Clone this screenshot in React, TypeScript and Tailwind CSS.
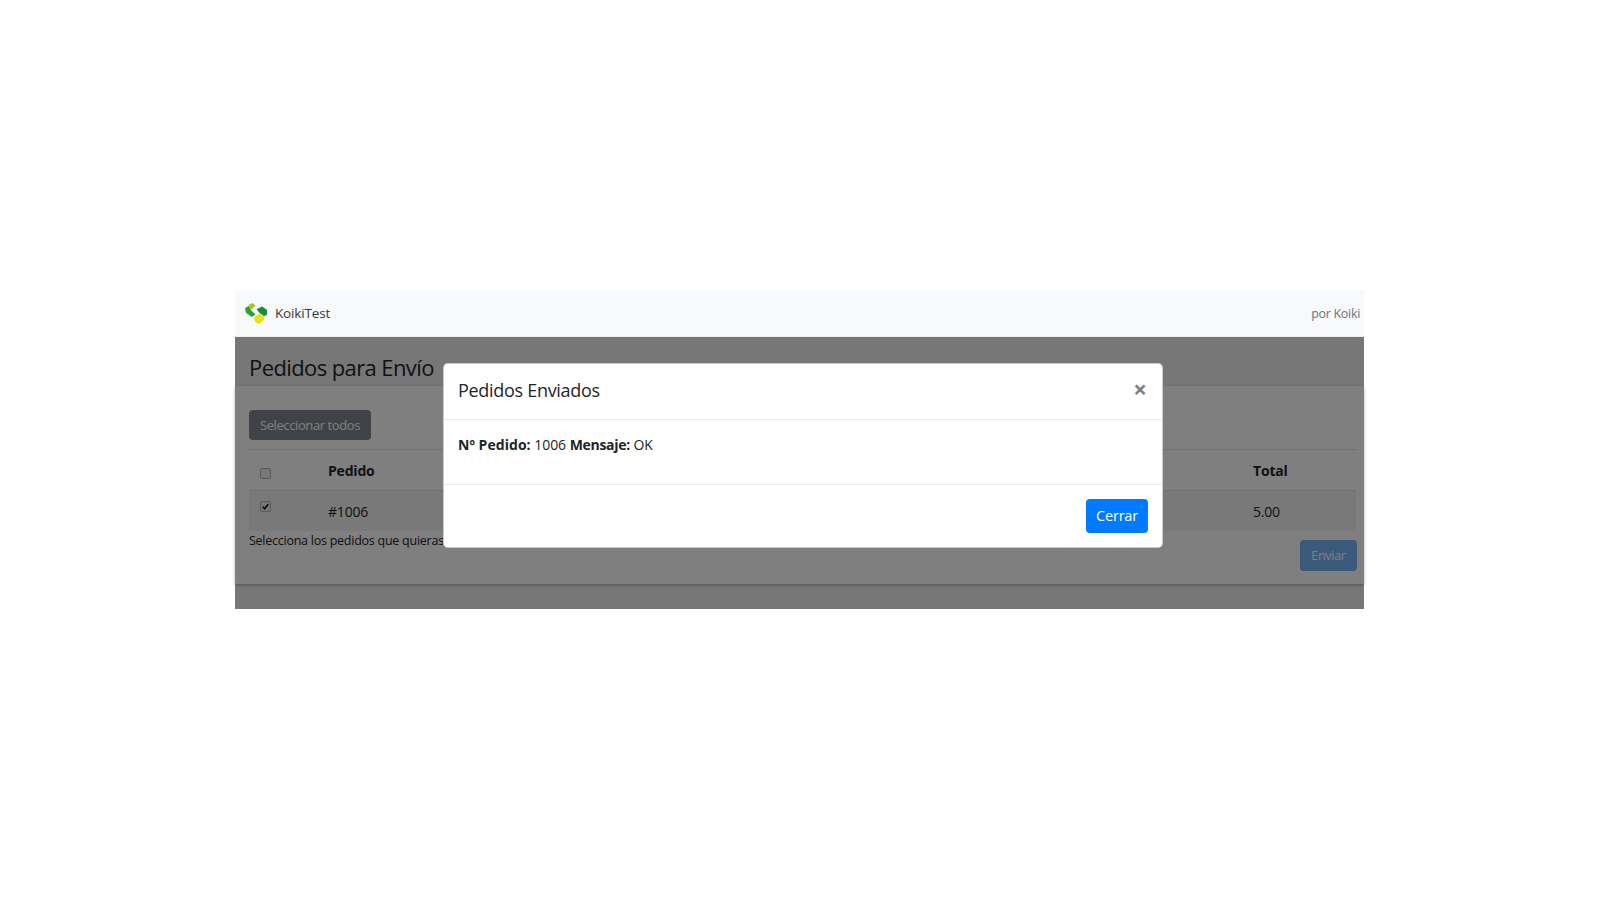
const font = "font-['Open_Sans','Noto_Sans',sans-serif]";

function Logo() {
  return (
    <svg width="23" height="21" viewBox="0 0 24 24" preserveAspectRatio="none" className="shrink-0">
      <polygon points="4,2 8,0 11,3 6,8" fill="#a6c80c" />
      <polygon points="0,6 4,3 6,8 11,13 7,16 1,11" fill="#2f9e37" />
      <polygon points="12,7 18,4 23,8 23,13 20,15 15,11" fill="#1c8a3c" />
      <polygon points="9,17 15,12 20,15 20,19 15,24 11,22" fill="#e9e21a" />
    </svg>
  );
}

function Checkbox({ checked, className }: { checked?: boolean; className: string }) {
  return (
    <span className={`relative block h-[11px] w-[11px] ${className}`}>
      <input
        type="checkbox"
        checked={!!checked}
        readOnly
        className="block h-[11px] w-[11px] appearance-none rounded-[2px] border border-[#b4b4b4] bg-[#f0f0f0]"
      />
      {checked && (
        <svg viewBox="0 0 12 12" className="absolute inset-0 h-[11px] w-[11px]">
          <path d="M3 6.2 5 8.4 9 3.6" fill="none" stroke="#111" strokeWidth="1.8" />
        </svg>
      )}
    </span>
  );
}

export default function App() {
  return (
    <div className={`min-h-[900px] bg-white pt-[290px] pl-[235px] text-[#212529] ${font}`}>
      <div className="relative w-[1129px]">
        <nav className="flex h-[47px] items-center justify-between border-b border-[#eceef0] bg-[#f8f9fa] pl-[10px] pr-[4px]">
          <div className="flex items-center gap-[7px] text-[13.5px] tracking-[-0.15px] text-[#343a40]">
            <Logo />
            <span>KoikiTest</span>
          </div>
          <span className="pt-[3px] text-[12.5px] tracking-[-0.3px] text-[#6c757d]">por Koiki</span>
        </nav>

        <main className="bg-[#eeeeee] pb-[25px]">
          <h1 className="h-[49px] pl-[14px] pt-[13px] text-[22px] leading-[34px] tracking-[-0.6px]">Pedidos para Envío</h1>
          <section className="h-[198px] bg-white pl-[14px] pr-[7px] pt-[24px] shadow-[0_1px_3px_rgba(0,0,0,0.3)]">
            <button className="h-[30px] w-[122px] rounded bg-[#7e868e] pt-[2px] text-[13px] tracking-[-0.4px] text-white">Seleccionar todos</button>
            <table className="mt-[9px] w-[1107px] table-fixed border-t border-[#dee2e6] text-[14px] tracking-[-0.2px]">
              <colgroup>
                <col className="w-[67px]" />
                <col />
                <col className="w-[115px]" />
              </colgroup>
              <thead>
                <tr className="h-[41px] border-b border-[#dee2e6] text-left">
                  <th className="pl-[11px] align-middle font-normal">
                    <Checkbox className="mt-[7px]" />
                  </th>
                  <th className="pl-[12px] font-bold">Pedido</th>
                  <th className="pl-[12px] font-bold">Total</th>
                </tr>
              </thead>
              <tbody>
                <tr className="h-[40px] bg-[#f2f2f2]">
                  <td className="pl-[11px] align-top">
                    <Checkbox checked className="mt-[10px]" />
                  </td>
                  <td className="pl-[12px] pt-[2px]">#1006</td>
                  <td className="pl-[12px] pt-[2px]">5.00</td>
                </tr>
              </tbody>
            </table>
            <div className="flex items-start justify-between">
              <p className="text-[12.5px] leading-[20px] tracking-[-0.25px]">Selecciona los pedidos que quieras enviar y pulsa Enviar</p>
              <button className="mt-[9px] h-[31px] w-[57px] rounded bg-[#74b4f8] pt-[3px] text-[12.5px] tracking-[-0.3px] text-white">Enviar</button>
            </div>
          </section>
        </main>

        <div className="absolute inset-x-0 bottom-0 top-[47px] bg-black/50" />

        <div className="absolute left-[208px] top-[73px] flex h-[185px] w-[720px] flex-col rounded-[5px] border border-black/20 bg-white">
          <header className="flex h-[56px] items-center justify-between border-b border-[#e9ecef] pl-[14px] pr-[15px]">
            <h2 className="mb-[2px] text-[18px] tracking-[-0.3px]">Pedidos Enviados</h2>
            <span className="mb-[6px] text-[24px] font-bold leading-none text-[#7f7f7f]">×</span>
          </header>
          <div className="h-[65px] border-b border-[#e9ecef] px-[14px] pt-[14px] text-[14px] leading-[22px] tracking-[-0.05px]">
            <b className="tracking-[0.05px]">Nº Pedido:</b> 1006 <b className="tracking-[-0.3px]">Mensaje:</b> OK
          </div>
          <footer className="flex flex-1 items-center justify-end pr-[14px]">
            <button className="h-[34px] w-[62px] rounded bg-[#007bff] text-[14.5px] tracking-[-0.2px] text-white">Cerrar</button>
          </footer>
        </div>
      </div>
    </div>
  );
}
